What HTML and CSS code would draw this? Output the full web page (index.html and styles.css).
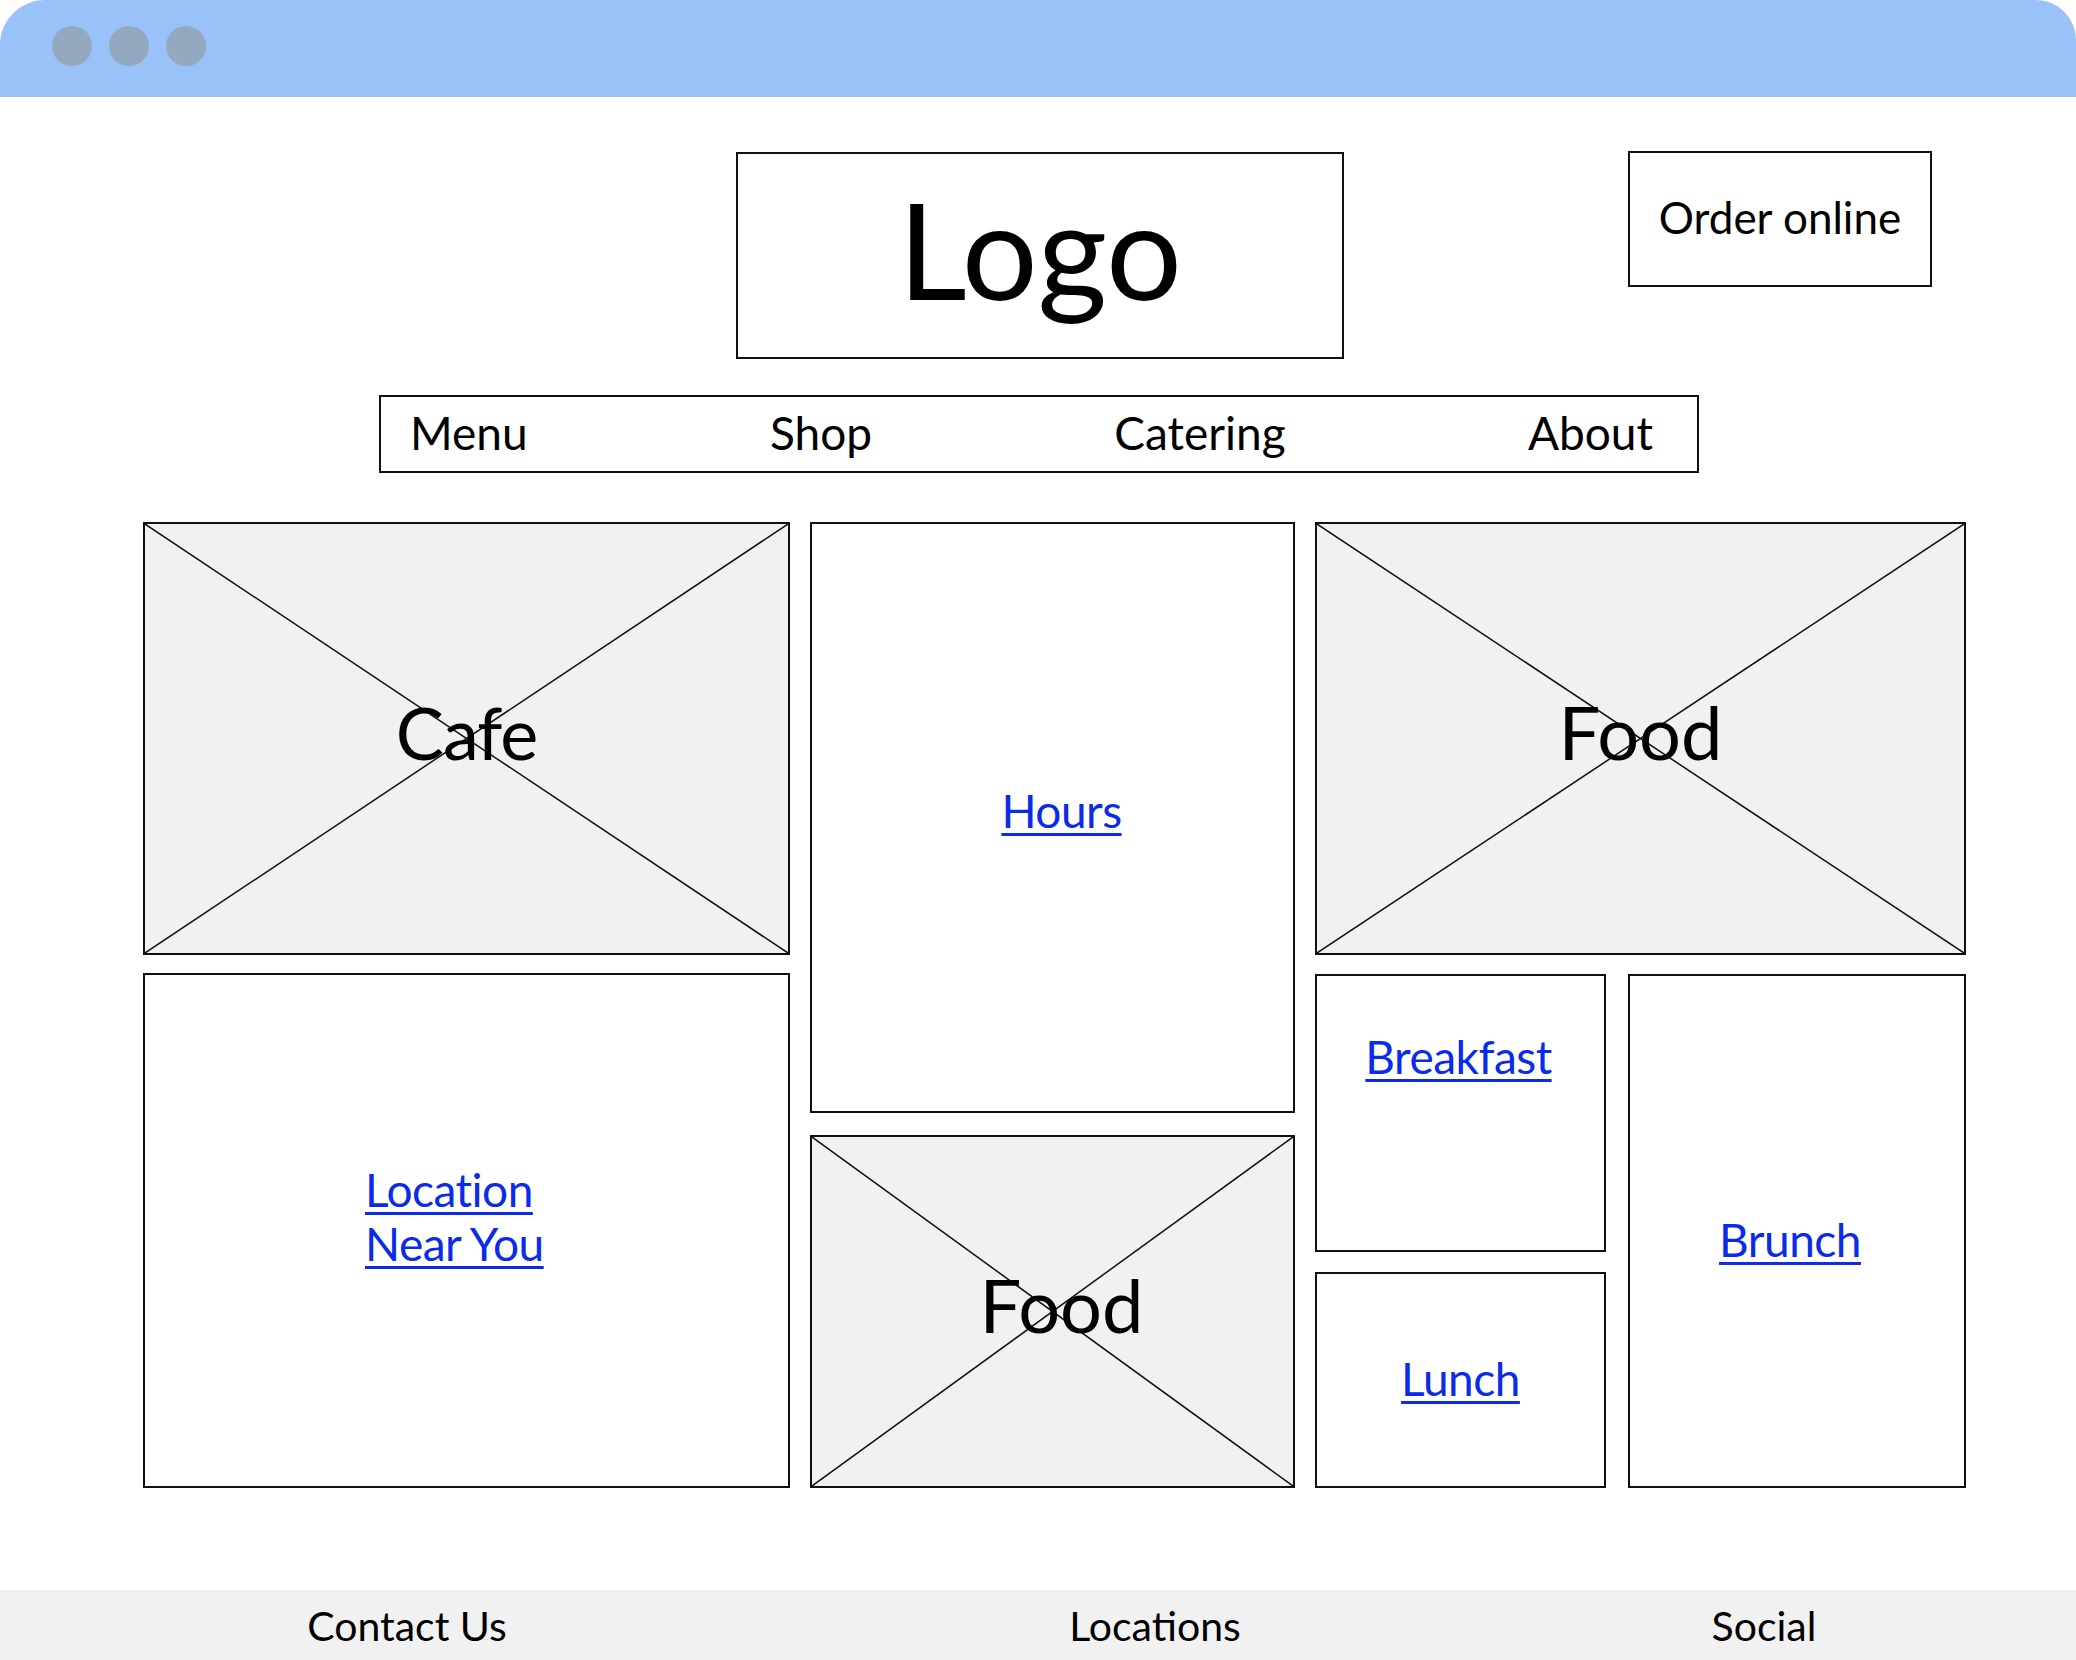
FILE: index.html
```html
<!DOCTYPE html>
<html lang="en">
<head>
    <meta charset="UTF-8">
    <meta name="viewport" content="width=device-width, initial-scale=1.0">
    <title>Cafe Wireframe</title>
    <link rel="stylesheet" href="styles.css">
</head>
<body>
    <div class="titlebar">
        <span class="dot"></span>
        <span class="dot"></span>
        <span class="dot"></span>
    </div>

    <header class="header">
        <div class="logo">Logo</div>
        <div class="order">Order online</div>
    </header>

    <nav class="nav">
        <span>Menu</span>
        <span>Shop</span>
        <span>Catering</span>
        <span>About</span>
    </nav>

    <main class="grid">
        <div class="col col-a">
            <div class="box placeholder cafe">
                <svg class="cross" viewBox="0 0 100 100" preserveAspectRatio="none">
                    <line x1="0" y1="0" x2="100" y2="100" vector-effect="non-scaling-stroke"/>
                    <line x1="100" y1="0" x2="0" y2="100" vector-effect="non-scaling-stroke"/>
                </svg>
                <span class="label label-cafe">Cafe</span>
            </div>
            <div class="box location">
                <a href="#">Location<br>Near You</a>
            </div>
        </div>

        <div class="col col-b">
            <div class="box hours">
                <a href="#">Hours</a>
            </div>
            <div class="box placeholder food-small">
                <svg class="cross" viewBox="0 0 100 100" preserveAspectRatio="none">
                    <line x1="0" y1="0" x2="100" y2="100" vector-effect="non-scaling-stroke"/>
                    <line x1="100" y1="0" x2="0" y2="100" vector-effect="non-scaling-stroke"/>
                </svg>
                <span class="label">Food</span>
            </div>
        </div>

        <div class="col col-c">
            <div class="box placeholder food-big">
                <svg class="cross" viewBox="0 0 100 100" preserveAspectRatio="none">
                    <line x1="0" y1="0" x2="100" y2="100" vector-effect="non-scaling-stroke"/>
                    <line x1="100" y1="0" x2="0" y2="100" vector-effect="non-scaling-stroke"/>
                </svg>
                <span class="label">Food</span>
            </div>
            <div class="meals">
                <div class="meals-left">
                    <div class="box breakfast"><a href="#">Breakfast</a></div>
                    <div class="box lunch"><a href="#">Lunch</a></div>
                </div>
                <div class="box brunch"><a href="#">Brunch</a></div>
            </div>
        </div>
    </main>

    <footer class="footer">
        <span>Contact Us</span>
        <span>Locations</span>
        <span>Social</span>
    </footer>
</body>
</html>
```

FILE: styles.css
```css
body {
    margin: 0;
    font-family: Lato, "Open Sans", sans-serif;
    color: #000;
    background: #fff;
    height: 1660px;
    overflow: hidden;
}

/* window bar */
.titlebar {
    height: 97px;
    background: #9ac2f9;
    border-radius: 45px 40px 0 0;
    display: flex;
    align-items: center;
    gap: 17px;
    padding-left: 52px;
}
.dot {
    width: 40px;
    height: 40px;
    border-radius: 50%;
    background: #94a8c0;
    margin-top: -6px;
}

/* header */
.header {
    display: flex;
    align-items: flex-start;
    padding-top: 55px;
    padding-left: 736px;
}
.logo {
    box-sizing: border-box;
    width: 608px;
    height: 207px;
    border: 2px solid #111;
    display: flex;
    align-items: center;
    justify-content: center;
    font-size: 134px;
    padding-bottom: 14px;
}
.order {
    box-sizing: border-box;
    width: 304px;
    height: 136px;
    margin-left: 284px;
    margin-top: -1px;
    border: 2px solid #111;
    display: flex;
    justify-content: center;
    padding-top: 37px;
    font-size: 44px;
    line-height: 54px;
}

.nav {
    box-sizing: border-box;
    width: 1320px;
    height: 78px;
    margin: 36px 0 0 379px;
    border: 2px solid #111;
    display: flex;
    align-items: center;
    justify-content: space-between;
    padding: 0 44px 4px 29px;
    font-size: 46px;
}

/* content grid */
.grid {
    display: flex;
    gap: 20px;
    margin-top: 49px;
    padding-left: 143px;
    height: 966px;
}
.col {
    display: flex;
    flex-direction: column;
}
.col-a { width: 647px; gap: 18px; }
.col-b { width: 485px; gap: 22px; }
.col-c { width: 651px; gap: 19px; }

.box {
    box-sizing: border-box;
    border: 2px solid #111;
    position: relative;
    display: flex;
    align-items: center;
    justify-content: center;
}
.box a {
    color: #0b2bea;
    font-size: 46px;
    line-height: 54px;
    letter-spacing: -0.5px;
    text-decoration-thickness: 3px;
    text-underline-offset: 5px;
}
.placeholder {
    background: #f1f1f1;
}
.cross {
    position: absolute;
    left: 0;
    top: 0;
    width: 100%;
    height: 100%;
}
.cross line {
    stroke: #111;
    stroke-width: 1.5;
}
.label {
    position: relative;
    font-size: 74px;
    margin-bottom: 14px;
}
.label-cafe {
    font-size: 72px;
    letter-spacing: -1px;
}

.cafe { height: 433px; }
.location {
    height: 515px;
    justify-content: flex-start;
    padding: 0 0 28px 220px;
}
.hours { height: 591px; padding: 0 0 14px 18px; }
.food-small { height: 353px; padding-left: 18px; }
.food-big { height: 433px; }

.meals {
    display: flex;
    gap: 22px;
    height: 514px;
}
.meals-left {
    width: 291px;
    display: flex;
    flex-direction: column;
    gap: 20px;
}
.breakfast {
    height: 278px;
    align-items: flex-start;
    padding: 54px 4px 0 0;
}
.lunch { height: 216px; padding-bottom: 2px; }
.brunch {
    width: 338px;
    padding: 18px 14px 0 0;
}

/* footer */
.footer {
    margin-top: 102px;
    height: 70px;
    background: #f1f1f1;
    display: grid;
    grid-template-columns: 814px 682px 536px;
    align-items: center;
    justify-items: center;
    font-size: 41px;
    padding-bottom: 4px;
}
```
